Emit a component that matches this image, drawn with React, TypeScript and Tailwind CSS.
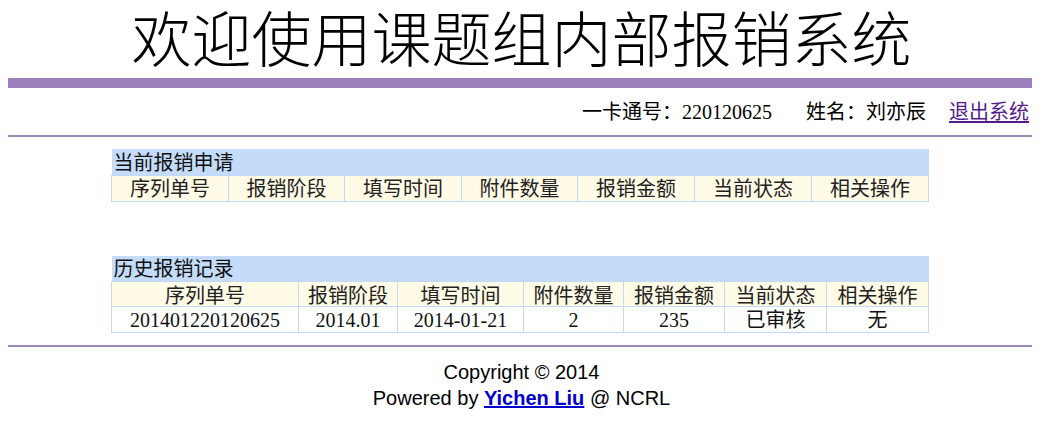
const CJK = '"Noto Sans CJK SC", sans-serif'
const SERIF = '"Liberation Serif", "Noto Sans CJK SC", serif'

const COLS = ['序列单号', '报销阶段', '填写时间', '附件数量', '报销金额', '当前状态', '相关操作']
const CURRENT_WIDTHS = ['w-[117px]', 'w-[116px]', 'w-[117px]', 'w-[116px]', 'w-[117px]', 'w-[117px]', 'w-[117px]']
const HISTORY_WIDTHS = ['w-[187px]', 'w-[99px]', 'w-[126px]', 'w-[100px]', 'w-[101px]', 'w-[102px]', 'w-[102px]']

const HISTORY_ROWS = [
  ['201401220120625', '2014.01', '2014-01-21', '2', '235', '已审核', '无'],
]

function Caption({ text }: { text: string }) {
  return (
    <tr>
      <td colSpan={7} className="h-[26px] bg-[#c4dcfa] px-[2px] text-left text-[20px] leading-[24px] text-[#111]">
        {text}
      </td>
    </tr>
  )
}

function Cols({ widths }: { widths: string[] }) {
  return (
    <colgroup>
      {widths.map((w, i) => (
        <col key={i} className={w} />
      ))}
    </colgroup>
  )
}

export default function App() {
  return (
    <div className="w-[1043px] h-[424px] bg-white overflow-hidden">
      {/* Title */}
      <div className="pt-[2px] pb-[8px] text-center">
        <h1 className="text-[60px] leading-[68px] font-light text-black" style={{ fontFamily: CJK }}>
          欢迎使用课题组内部报销系统
        </h1>
      </div>

      <div className="ml-2 w-[1024px]">
        <div className="h-[10px] bg-[#9b80bb]" />

        {/* User info */}
        <div
          className="h-[47px] flex items-center justify-end pr-[3px] text-[20px] leading-[22px] text-black"
          style={{ fontFamily: SERIF }}
        >
          <span>一卡通号：220120625</span>
          <span className="ml-[34px]">姓名：刘亦辰</span>
          <a href="#" className="ml-[23px] text-[#551a8b] underline underline-offset-2">退出系统</a>
        </div>
        <div className="h-[2px] bg-[#9a86b8]" />
      </div>

      {/* Current applications */}
      <table className="mt-[12px] ml-[111px] w-[817px] border-collapse table-fixed" style={{ fontFamily: CJK }}>
        <Cols widths={CURRENT_WIDTHS} />
        <tbody>
          <Caption text="当前报销申请" />
          <tr>
            {COLS.map((c) => (
              <td key={c} className="h-[26px] p-0 border border-[#c3d9f3] bg-[#fffbe6] text-center text-[20px] leading-[24px] text-[#222]">
                {c}
              </td>
            ))}
          </tr>
        </tbody>
      </table>

      {/* History */}
      <table className="mt-[54px] ml-[111px] w-[817px] border-collapse table-fixed" style={{ fontFamily: CJK }}>
        <Cols widths={HISTORY_WIDTHS} />
        <tbody>
          <Caption text="历史报销记录" />
          <tr>
            {COLS.map((c) => (
              <td key={c} className="h-[25px] p-0 border border-[#c3d9f3] bg-[#fffbe6] text-center text-[20px] leading-[23px] text-[#222]">
                {c}
              </td>
            ))}
          </tr>
          {HISTORY_ROWS.map((row) => (
            <tr key={row[0]}>
              {row.map((v, i) => (
                <td
                  key={i}
                  className="h-[26px] p-0 border border-[#c3d9f3] text-center text-[20px] leading-[24px] text-[#111]"
                  style={{ fontFamily: SERIF }}
                >
                  {v}
                </td>
              ))}
            </tr>
          ))}
        </tbody>
      </table>

      {/* Footer */}
      <div className="ml-2 w-[1024px] mt-[12px] h-[2px] bg-[#9a86b8]" />
      <div className="mt-[12px] text-center text-[20px] leading-[26px] text-black" style={{ fontFamily: '"Liberation Sans", Arial, sans-serif' }}>
        <p>Copyright © 2014</p>
        <p>
          Powered by <a href="#" className="font-bold text-[#0000cc] underline">Yichen Liu</a> @ NCRL
        </p>
      </div>
    </div>
  )
}
